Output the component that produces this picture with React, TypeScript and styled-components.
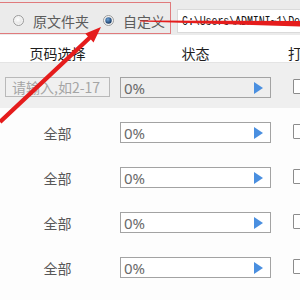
import React from "react";
import styled, { createGlobalStyle } from "styled-components";

const GlobalStyle = createGlobalStyle`
  html, body { margin: 0; padding: 0; background: #ffffff; overflow: hidden; }
  body { font-family: "Noto Sans CJK SC", "Noto Sans", sans-serif; }
`;

const Page = styled.div`
  position: relative;
  width: 340px;
  height: 300px;
  background: #fdfdfd;
`;

const TopBar = styled.div`
  height: 35px;
  box-sizing: border-box;
  padding-top: 2px;
  background: #ebebeb;
  display: flex;
  align-items: flex-start;
`;

const ModeBox = styled.div`
  flex-shrink: 0;
  box-sizing: border-box;
  height: 32px;
  padding: 5px 5px 0 13px;
  border: 1px solid #e07a7c;
  border-left: none;
  display: flex;
  align-items: center;
`;

const RadioOption = styled.label<{ $gapAfter?: number }>`
  flex-shrink: 0;
  white-space: nowrap;
  display: flex;
  align-items: center;
  gap: 9px;
  margin-right: ${(p) => p.$gapAfter ?? 0}px;
  font-size: 14px;
  line-height: 16px;
  color: #5c5c5c;
`;

const PathInput = styled.div`
  margin: 7px 0 0 6px;
  height: 24px;
  flex: 1;
  min-width: 0;
  box-sizing: border-box;
  background: #ffffff;
  border: 1px solid #dadada;
  border-right: none;
  display: flex;
  align-items: center;
  padding-left: 4px;
  overflow: hidden;
  white-space: nowrap;
`;

const PathText = styled.span`
  font-family: "Liberation Mono", monospace;
  font-size: 10px;
  color: #111;
  letter-spacing: -0.1px;
  display: inline-block;
  transform: scaleY(1.35);
  transform-origin: left center;
`;

const Grid = styled.div`
  display: grid;
  grid-template-columns: 115px 161px 1fr;
`;

const HeaderRow = styled(Grid)`
  height: 28px;
  box-sizing: border-box;
  background: #ffffff;
  border-bottom: 1px solid #e4e4e4;
  padding-top: 9px;
  font-size: 14px;
  line-height: 18px;
  color: #1e1e1e;
`;

const HeadCell = styled.div<{ $align?: string }>`
  text-align: ${(p) => p.$align ?? "center"};
  padding-left: ${(p) => (p.$align === "left" ? "12px" : "0")};
  white-space: nowrap;
`;

const Row = styled(Grid)<{ $shaded?: boolean }>`
  height: 45px;
  box-sizing: border-box;
  padding-top: 14px;
  background: ${(p) => (p.$shaded ? "#efefef" : "#fdfdfd")};
`;

const PageCell = styled.div`
  height: 21px;
  display: flex;
  align-items: center;
  justify-content: center;
  font-size: 14px;
  color: #585858;
`;

const RangeInput = styled.div`
  box-sizing: border-box;
  width: 105px;
  height: 20px;
  margin-left: 5px;
  align-self: flex-start;
  border: 1px solid #b9b9b9;
  background: #f0f0f0;
  color: #a5a5a5;
  font-size: 14px;
  line-height: 18px;
  padding-left: 6px;
  white-space: nowrap;
`;

const StatusBox = styled.div<{ $shaded?: boolean }>`
  box-sizing: border-box;
  margin-left: 5px;
  width: 151px;
  height: 21px;
  border: 1px solid #a3a3a3;
  background: ${(p) => (p.$shaded ? "#eeeeee" : "#ffffff")};
  display: flex;
  align-items: center;
  justify-content: space-between;
  padding: 0 7px 0 3px;
  font-family: "Noto Sans", sans-serif;
  font-size: 15px;
  color: #6a6a6a;
`;

const PlayIcon = styled.span`
  width: 0;
  height: 0;
  border-top: 6px solid transparent;
  border-bottom: 6px solid transparent;
  border-left: 9px solid #4a8fe0;
`;

const CheckCell = styled.div`
  padding: 2px 0 0 17px;
`;

const CheckBox = styled.span`
  display: block;
  box-sizing: border-box;
  width: 15px;
  height: 15px;
  border: 1px solid #8c8c8c;
  background: #ffffff;
  border-radius: 1px;
`;

const Overlay = styled.svg`
  position: absolute;
  left: 0;
  top: 0;
  pointer-events: none;
`;

const RadioIcon = ({ checked }: { checked?: boolean }) => (
  <svg width="11" height="11" viewBox="0 0 11 11">
    <defs>
      <radialGradient id={checked ? "rg1" : "rg0"} cx="0.4" cy="0.35" r="0.7">
        <stop offset="0" stopColor={checked ? "#6fa3d8" : "#ffffff"} />
        <stop offset="1" stopColor={checked ? "#10325c" : "#e2e2e2"} />
      </radialGradient>
    </defs>
    <circle cx="5.5" cy="5.5" r="5" fill="#f4f4f4" stroke="#9a9a9a" strokeWidth="1" />
    <circle cx="5.5" cy="5.5" r="3.2" fill={checked ? "url(#rg1)" : "url(#rg0)"} />
  </svg>
);

const rows = [1, 2, 3, 4, 5];

export default function App() {
  return (
    <>
      <GlobalStyle />
      <Page>
        <TopBar>
          <ModeBox>
            <RadioOption $gapAfter={14}>
              <RadioIcon />
              原文件夹
            </RadioOption>
            <RadioOption>
              <RadioIcon checked />
              自定义
            </RadioOption>
          </ModeBox>
          <PathInput>
            <PathText>C:\Users\ADMINI~1\Desktop\</PathText>
          </PathInput>
        </TopBar>
        <HeaderRow>
          <HeadCell>页码选择</HeadCell>
          <HeadCell>状态</HeadCell>
          <HeadCell $align="left">打开</HeadCell>
        </HeaderRow>
        {rows.map((r) => (
          <Row key={r} $shaded={r === 1}>
            {r === 1 ? (
              <RangeInput>请输入,如2-17</RangeInput>
            ) : (
              <PageCell>全部</PageCell>
            )}
            <StatusBox $shaded={r === 1}>
              <span>0%</span>
              <PlayIcon />
            </StatusBox>
            <CheckCell>
              <CheckBox />
            </CheckCell>
          </Row>
        ))}
        <Overlay width="300" height="300" viewBox="0 0 300 300">
          <polygon points="140,20.5 300,21 300,26.5 140,21.5" fill="#e51c1c" />
          <polygon
            points="-1.5,120.4 87.9,36.4 85.3,33.6 101,27 93.5,42.4 90.9,39.6 1.5,123.6"
            fill="#e51c1c"
          />
        </Overlay>
      </Page>
    </>
  );
}
